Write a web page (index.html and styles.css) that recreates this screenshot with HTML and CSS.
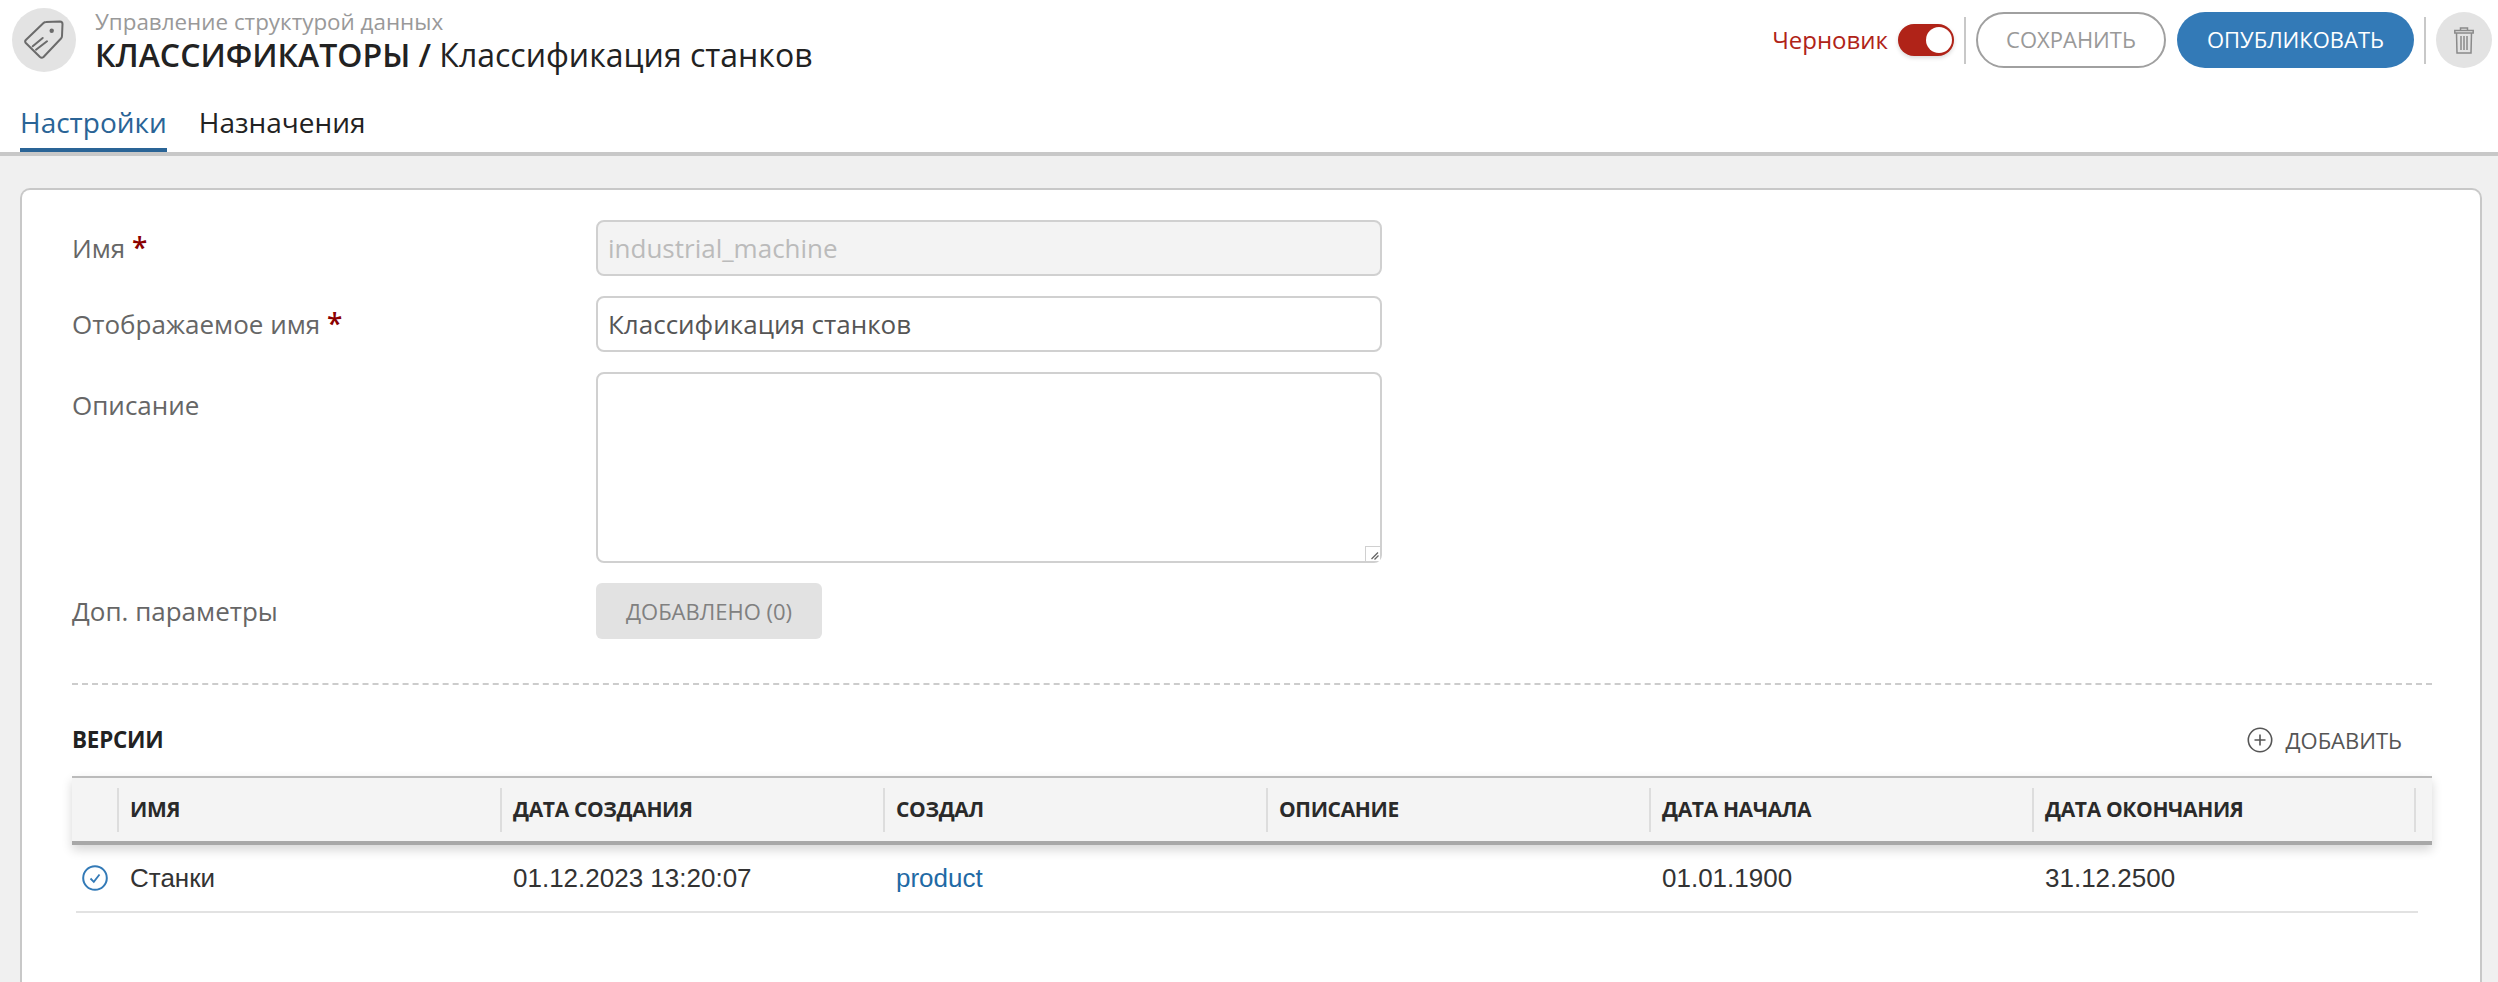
FILE: index.html
```html
<!DOCTYPE html>
<html lang="ru">
<head>
<meta charset="utf-8">
<title>Классификация станков</title>
<link rel="stylesheet" href="styles.css">
</head>
<body>
<header class="topbar">
  <div class="heading">
    <div class="round-icon tag-circle">
      <svg class="tag-icon" viewBox="0 0 40 40" fill="none" stroke="#6b6b6b" stroke-width="2" stroke-linejoin="round" stroke-linecap="round">
        <path d="M19.500 3 Q20.500 2 22 2 L36 1.500 Q38.500 1.500 38.500 4 L38 16 Q38 17.500 37 18.500 L19.500 37 Q17.700 38.500 16 37 L1.800 23 Q0.500 21.500 1.800 20 Z"/>
        <circle cx="27.700" cy="10.700" r="2.200" fill="#6b6b6b" stroke="none"/>
        <path d="M8.700 26.300 L18.700 18 M12 29.700 L23 21.300"/>
      </svg>
    </div>
    <div class="titles">
      <div class="subtitle">Управление структурой данных</div>
      <h1 class="title"><b>КЛАССИФИКАТОРЫ /</b> Классификация станков</h1>
    </div>
  </div>
  <div class="actions">
    <span class="draft">Черновик</span>
    <span class="toggle"><span class="knob"></span></span>
    <span class="divider"></span>
    <button class="pill pill-outline">СОХРАНИТЬ</button>
    <button class="pill pill-primary">ОПУБЛИКОВАТЬ</button>
    <span class="divider"></span>
    <div class="round-icon trash-circle">
      <svg class="trash-icon" viewBox="0 0 20 27" fill="none" stroke="#8a8a8a" stroke-width="1.500">
        <path d="M6.500 3 V1 H13.500 V3"/>
        <path d="M0.800 6 V3.500 H19.200 V6 Z"/>
        <path d="M2.500 6 L3 26 H17 L17.500 6"/>
        <path d="M7 9 V23 M10 9 V23 M13 9 V23"/>
      </svg>
    </div>
  </div>
</header>
<nav class="tabs">
  <a class="tab tab-active">Настройки</a>
  <a class="tab">Назначения</a>
</nav>
<main class="content">
  <section class="card">
    <div class="form">
      <label class="label">Имя <span class="req">*</span></label>
      <input class="field field-disabled" value="industrial_machine" disabled>
      <label class="label">Отображаемое имя <span class="req">*</span></label>
      <input class="field" value="Классификация станков">
      <label class="label label-top">Описание</label>
      <div class="area-wrap">
        <textarea class="field area"></textarea>
        <span class="grip">
          <svg class="grip-icon" viewBox="0 0 8 8" fill="none" stroke="#666" stroke-width="1.300">
            <path d="M0.500 7 L7 0.500 M3.500 7.500 L7.500 3.500"/>
          </svg>
        </span>
      </div>
      <label class="label">Доп. параметры</label>
      <div><button class="added">ДОБАВЛЕНО (0)</button></div>
    </div>
    <hr class="dashed">
    <div class="versions-head">
      <h2 class="versions-title">ВЕРСИИ</h2>
      <a class="add">
        <svg class="add-icon" viewBox="0 0 26 26" fill="none" stroke="#555" stroke-width="1.600">
          <circle cx="13" cy="13" r="11.700"/>
          <path d="M13 7.500 V18.500 M7.500 13 H18.500"/>
        </svg>
        ДОБАВИТЬ
      </a>
    </div>
    <div class="table">
      <div class="thead">
        <div class="th th-first"></div>
        <div class="th">ИМЯ</div>
        <div class="th">ДАТА СОЗДАНИЯ</div>
        <div class="th">СОЗДАЛ</div>
        <div class="th">ОПИСАНИЕ</div>
        <div class="th">ДАТА НАЧАЛА</div>
        <div class="th th-last">ДАТА ОКОНЧАНИЯ</div>
      </div>
      <div class="trow">
        <div class="td td-first">
          <svg class="check-icon" viewBox="0 0 26 26" fill="none" stroke="#337ab7">
            <circle cx="13" cy="13" r="11.800" stroke-width="2"/>
            <path d="M8.500 13.500 L11.800 16.800 L17.500 9.500" stroke-width="1.800"/>
          </svg>
        </div>
        <div class="td">Станки</div>
        <div class="td">01.12.2023 13:20:07</div>
        <div class="td"><a class="link">product</a></div>
        <div class="td"></div>
        <div class="td">01.01.1900</div>
        <div class="td">31.12.2500</div>
      </div>
    </div>
  </section>
</main>
</body>
</html>
```
FILE: styles.css
```css
* { box-sizing: border-box; }
html, body { margin: 0; height: 982px; overflow: hidden; }
body {
  font-family: "Open Sans", "Noto Sans", sans-serif;
  background: #fff;
  color: #333;
  display: flex;
  flex-direction: column;
}
.topbar {
  display: flex;
  justify-content: space-between;
  height: 100px;
  padding: 8px 6px 0 12px;
}
.heading { display: flex; gap: 19px; align-items: flex-start; }
.round-icon {
  border-radius: 50%;
  background: #e3e3e3;
  display: flex;
  align-items: center;
  justify-content: center;
  flex: none;
}
.tag-circle { width: 64px; height: 64px; }
.tag-icon { width: 40px; height: 40px; }
.subtitle { font-size: 22.400px; line-height: 28px; color: #999; }
.title { margin: 0; font-size: 32px; line-height: 38px; font-weight: 400; color: #222; }
.title b { font-weight: 600; }
.actions { display: flex; align-items: center; height: 56px; margin-top: 4px; }
.draft { font-size: 24px; color: #b02318; margin-right: 10px; margin-left: 0; padding-bottom: 2px; }
.toggle {
  width: 56px;
  height: 32px;
  border-radius: 16px;
  background: #b02318;
  box-shadow: 0 2px 4px rgba(0,0,0,.15);
  display: flex;
  align-items: center;
  justify-content: flex-end;
  padding-right: 2px;
}
.knob { width: 26px; height: 26px; border-radius: 50%; background: #fff; }
.divider { width: 2px; height: 47px; background: #c8c8c8; margin: 0 10px; }
.pill {
  height: 56px;
  border-radius: 28px;
  font-family: inherit;
  font-size: 22px;
  padding: 0 0 2px;
}
.pill-outline { width: 190px; background: #fff; border: 2px solid #a0a0a0; color: #999; }
.pill-primary { width: 237px; background: #337ab7; border: 0; color: #fff; margin-left: 11px; }
.trash-circle { width: 56px; height: 56px; }
.trash-icon { width: 20px; height: 27px; }
.tabs {
  display: flex;
  gap: 32px;
  height: 56px;
  padding-left: 20px;
  border-bottom: 4px solid #c8c8c8;
}
.tab {
  font-size: 28px;
  line-height: 44px;
  height: 52px;
  color: #222;
  border-bottom: 4px solid transparent;
}
.tab-active { color: #2a6496; border-bottom-color: #2a6496; }
.content {
  flex: 1;
  background: #f0f0f0;
  padding: 32px 16px 0 20px;
  min-height: 0;
}
.card {
  height: 100%;
  background: #fff;
  border: 2px solid #c8c8c8;
  border-bottom: 0;
  border-radius: 10px 10px 0 0;
  padding: 30px 48px 0 50px;
}
.form {
  display: grid;
  grid-template-columns: 524px 786px;
  grid-template-rows: 56px 56px 191px 56px;
  row-gap: 20px;
  align-items: center;
}
.label { font-size: 26px; color: #666; }
.label-top { align-self: start; padding-top: 15px; }
.req { color: #8b0000; font-weight: 600; font-size: 28px; line-height: 20px; }
.field {
  width: 100%;
  height: 100%;
  border: 2px solid #d0d0d0;
  border-radius: 8px;
  background: #fff;
  font-family: inherit;
  font-size: 26px;
  color: #555;
  padding: 0 10px;
  margin: 0;
  display: block;
}
.field-disabled { background: #f3f3f3; color: #bbb; -webkit-text-fill-color: #bbb; opacity: 1; }
.area-wrap { position: relative; height: 100%; }
.area { resize: none; }
.grip {
  position: absolute;
  right: 2px;
  bottom: 2px;
  width: 15px;
  height: 15px;
  border-top: 1px solid #d0d0d0;
  border-left: 1px solid #d0d0d0;
  display: flex;
  align-items: flex-end;
  justify-content: flex-end;
  background: #fff;
}
.grip-icon { width: 8px; height: 8px; margin: 0 1px 1px 0; }
.added {
  width: 226px;
  height: 56px;
  border: 0;
  border-radius: 6px;
  background: #e2e2e2;
  color: #808080;
  font-family: inherit;
  font-size: 22px;
  padding: 0;
}
.dashed {
  border: 0;
  border-top: 2px dashed #ccc;
  margin: 44px 0 0;
}
.versions-head {
  display: flex;
  justify-content: space-between;
  align-items: center;
  height: 91px;
  padding: 18px 30px 0 0;
}
.versions-title { margin: 0; font-size: 22.400px; font-weight: 700; color: #222; letter-spacing: -0.200px; }
.add { display: flex; align-items: center; gap: 12px; font-size: 22px; color: #555; }
.add-icon { width: 26px; height: 26px; }
.table { display: flex; flex-direction: column; }
.thead, .trow {
  display: grid;
  grid-template-columns: 45px repeat(5, 383px) 1fr;
}
.thead {
  height: 69px;
  background: #f4f4f4;
  border-top: 2px solid #bbb;
  border-bottom: 4px solid #a8a8a8;
  box-shadow: 0 5px 10px rgba(0,0,0,.16);
  align-items: center;
  position: relative;
  padding-right: 16px;
}
.th {
  height: 44px;
  line-height: 42px;
  padding-left: 11px;
  border-left: 2px solid #ddd;
  font-size: 21px;
  font-weight: 700;
  letter-spacing: -0.350px;
  color: #2a2a2a;
}
.th-first { border-left: 0; }
.th-last { border-right: 2px solid #ddd; }
.trow {
  height: 68px;
  margin: 0 14px 0 4px;
  border-bottom: 2px solid #e2e2e2;
  grid-template-columns: 41px repeat(5, 383px) 1fr;
  align-items: center;
}
.td {
  font-family: "Liberation Sans", Arial, sans-serif;
  font-size: 26px;
  color: #333;
  padding-left: 13px;
}
.td-first { padding-left: 6px; display: flex; }
.check-icon { width: 26px; height: 26px; }
.link { color: #1f6aa5; }
```
